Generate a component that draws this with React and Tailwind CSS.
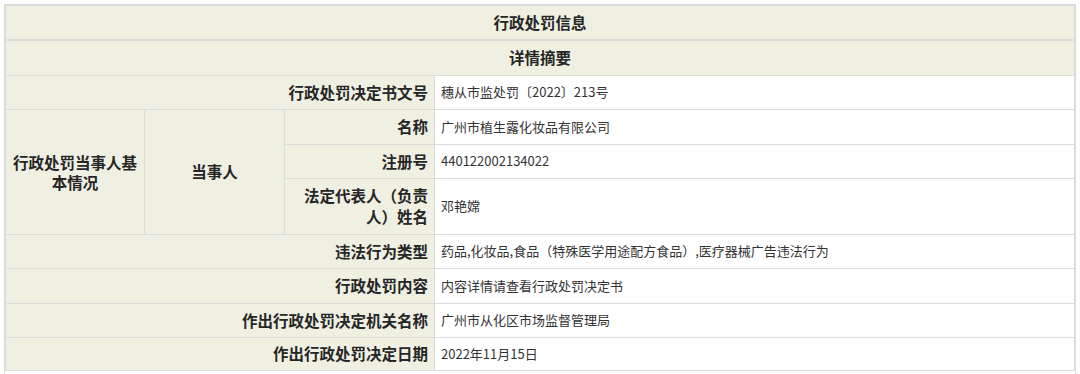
const rows = [
  { label: '违法行为类型', value: '药品,化妆品,食品（特殊医学用途配方食品）,医疗器械广告违法行为', h: 'h-[34px]' },
  { label: '行政处罚内容', value: '内容详情请查看行政处罚决定书', h: 'h-[35px]' },
  { label: '作出行政处罚决定机关名称', value: '广州市从化区市场监督管理局', h: 'h-[34px]' },
  { label: '作出行政处罚决定日期', value: '2022年11月15日', h: 'h-[33px]' },
]

const cell = 'border border-[#dcdcdc]'
const label = `${cell} bg-[#f0f0e2] text-right font-bold text-[15.5px] text-[#262626] pl-[12px] pr-[6px] leading-[21px]`
const value = `${cell} bg-white text-[13px] text-[#333] px-[6px] leading-[20px]`

export default function App() {
  return (
    <div
      className="w-[1080px] h-[374px] bg-white pt-[4px] px-[4px]"
      style={{ fontFamily: '"Noto Sans CJK SC", "Noto Sans", sans-serif' }}
    >
      <div className="border-x border-[#dcdcdc] pb-[8px]">
        <table className="w-full border-collapse table-fixed">
          <colgroup>
            <col className="w-[139px]" />
            <col className="w-[140px]" />
            <col className="w-[150px]" />
            <col />
          </colgroup>
          <tbody>
            <tr className="h-[35px]">
              <td colSpan={4} className={`${cell} border-t-2 border-b-2 bg-[#f0f0e2] text-center font-bold text-[15.5px] text-[#262626]`}>
                行政处罚信息
              </td>
            </tr>
            <tr className="h-[35px]">
              <td colSpan={4} className={`${cell} bg-[#f0f0e2] text-center font-bold text-[15.5px] text-[#262626]`}>
                详情摘要
              </td>
            </tr>
            <tr className="h-[34px]">
              <td colSpan={3} className={label}>行政处罚决定书文号</td>
              <td className={value}>穗从市监处罚〔2022〕213号</td>
            </tr>
            <tr className="h-[35px]">
              <td rowSpan={3} className={`${cell} bg-[#f0f0e2] text-center font-bold text-[15.5px] text-[#262626] px-[6px] leading-[20px]`}>
                行政处罚当事人基本情况
              </td>
              <td rowSpan={3} className={`${cell} bg-[#f0f0e2] text-center font-bold text-[15.5px] text-[#262626]`}>
                当事人
              </td>
              <td className={label}>名称</td>
              <td className={value}>广州市植生露化妆品有限公司</td>
            </tr>
            <tr className="h-[34px]">
              <td className={label}>注册号</td>
              <td className={value}>440122002134022</td>
            </tr>
            <tr className="h-[56px]">
              <td className={label}>法定代表人（负责人）姓名</td>
              <td className={value}>邓艳嫦</td>
            </tr>
            {rows.map((r, i) => (
              <tr key={i} className={r.h}>
                <td colSpan={3} className={label}>{r.label}</td>
                <td className={value}>{r.value}</td>
              </tr>
            ))}
          </tbody>
        </table>
      </div>
    </div>
  )
}
